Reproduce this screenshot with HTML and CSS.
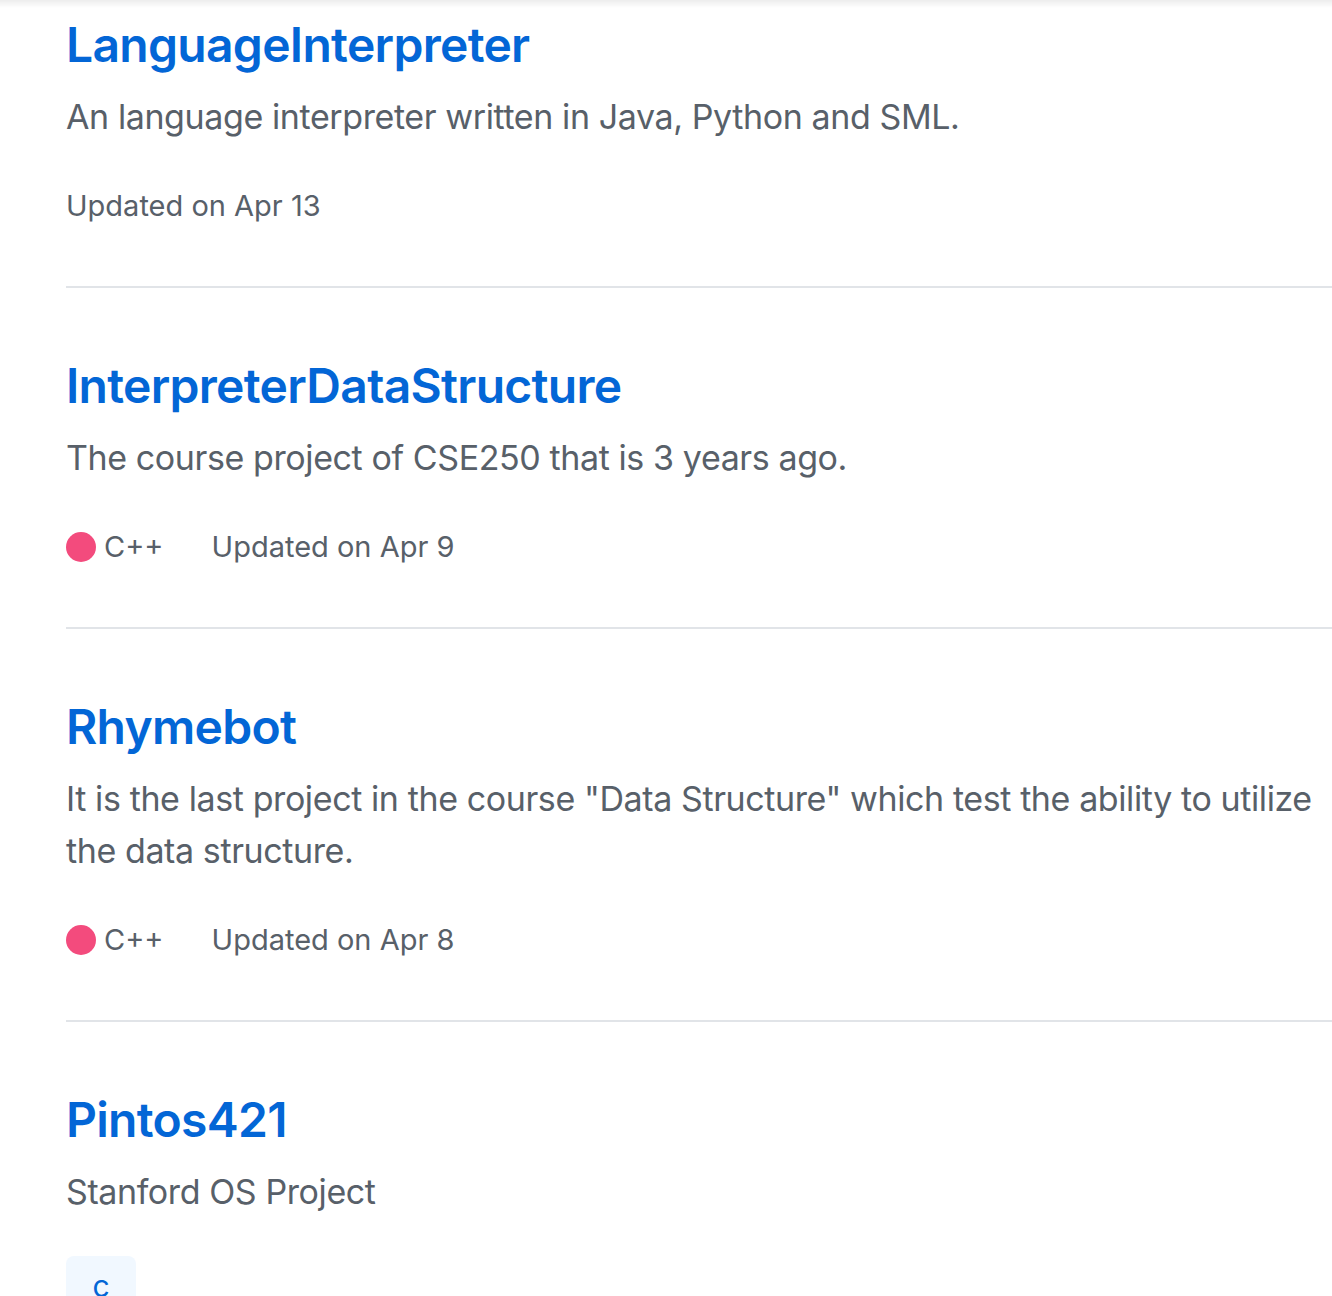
FILE: index.html
```html
<!DOCTYPE html>
<html lang="en">
<head>
<meta charset="utf-8">
<title>Repositories</title>
<link rel="stylesheet" href="styles.css">
</head>
<body>
<div class="topshade"></div>
<main class="repo-list">
  <article class="repo">
    <h3 class="repo-title"><a href="#">LanguageInterpreter</a></h3>
    <p class="repo-desc">An language interpreter written in Java, Python and SML.</p>
    <div class="repo-meta">
      <span class="updated">Updated on Apr 13</span>
    </div>
  </article>
  <article class="repo">
    <h3 class="repo-title"><a href="#">InterpreterDataStructure</a></h3>
    <p class="repo-desc">The course project of CSE250 that is 3 years ago.</p>
    <div class="repo-meta">
      <span class="lang"><span class="lang-dot"></span>C++</span>
      <span class="updated">Updated on Apr 9</span>
    </div>
  </article>
  <article class="repo">
    <h3 class="repo-title"><a href="#">Rhymebot</a></h3>
    <p class="repo-desc">It is the last project in the course "Data Structure" which test the ability to utilize the data structure.</p>
    <div class="repo-meta">
      <span class="lang"><span class="lang-dot"></span>C++</span>
      <span class="updated">Updated on Apr 8</span>
    </div>
  </article>
  <article class="repo">
    <h3 class="repo-title"><a href="#">Pintos421</a></h3>
    <p class="repo-desc">Stanford OS Project</p>
    <div class="topics">
      <a class="topic-tag" href="#">c</a>
    </div>
  </article>
</main>
</body>
</html>
```

FILE: styles.css
```css
* { box-sizing: border-box; }
html, body { margin: 0; padding: 0; }
body {
  background: #fff;
  font-family: Inter, "Noto Sans", "Liberation Sans", sans-serif;
  color: #586069;
  overflow: hidden;
}
.topshade {
  position: fixed;
  top: 0; left: 0; right: 0;
  height: 8px;
  background: linear-gradient(to bottom, rgba(0,0,0,0.07), rgba(0,0,0,0));
  pointer-events: none;
}
.repo-list {
  padding-left: 66px;
}
.repo {
  padding: 68px 0 59px;
  border-bottom: 2px solid #e1e4e8;
}
.repo:first-child {
  padding-top: 15px;
}
.repo-title {
  margin: 0;
  font-size: 48px;
  line-height: 60px;
  font-weight: 600;
  letter-spacing: -0.7px;
}
.repo-title a {
  color: #0366d6;
  text-decoration: none;
}
.repo-desc {
  margin: 16px 0 0;
  font-size: 34px;
  line-height: 52px;
  letter-spacing: -0.4px;
  color: #586069;
}
.repo-meta {
  margin-top: 42px;
  display: flex;
  align-items: center;
  font-size: 29px;
  line-height: 42px;
  color: #586069;
}
.lang {
  display: flex;
  align-items: center;
  gap: 8px;
  margin-right: 48px;
}
.lang-dot {
  width: 30px;
  height: 30px;
  border-radius: 50%;
  background: #f34b7d;
}
.topics {
  margin-top: 38px;
  display: flex;
}
.topic-tag {
  display: inline-block;
  width: 70px;
  padding: 10px 0;
  text-align: center;
  background: #f1f8ff;
  border-radius: 8px;
  color: #0366d6;
  font-size: 30px;
  line-height: 40px;
  text-decoration: none;
}
```
